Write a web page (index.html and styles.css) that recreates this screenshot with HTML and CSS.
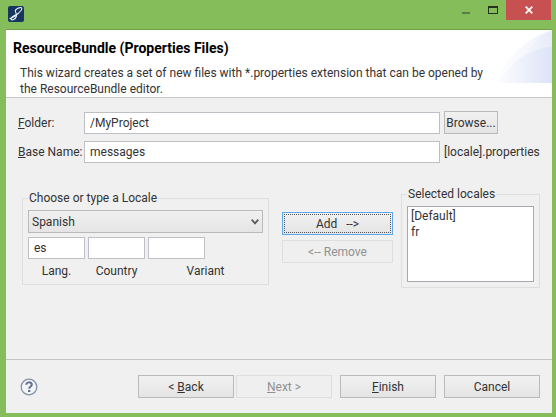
FILE: index.html
```html
<!DOCTYPE html>
<html lang="en">
<head>
<meta charset="utf-8">
<title>ResourceBundle (Properties Files)</title>
<link rel="stylesheet" href="styles.css">
</head>
<body>
<header class="titlebar">
  <svg class="app-icon" viewBox="0 0 16 16" aria-hidden="true">
    <rect width="16" height="16" rx="2" fill="#17365f"/>
    <path d="M1.500 12.500C6 12 13.500 5 13.800 2.700C14 1 10.500 1.200 8 3.500C5.500 6 9.500 7 8.500 10C7.500 13.500 3.500 15 3 13C2.600 11 7 9 10.500 7.500" fill="none" stroke="#e8eef8" stroke-width="1.100"/>
  </svg>
  <div class="window-buttons">
    <button class="caption-button" type="button" aria-label="Minimize"><svg width="10" height="10" viewBox="0 0 10 10"><path d="M1 7h8v2H1z" fill="#5d7b48"/></svg></button>
    <button class="caption-button" type="button" aria-label="Maximize"><svg width="10" height="8" viewBox="0 0 10 8"><path d="M0 0h10v8H0zM1 2v5h8V2z" fill="#26301f" fill-rule="evenodd"/></svg></button>
    <button class="caption-button close" type="button" aria-label="Close"><svg width="8" height="8" viewBox="0 0 8 8"><path d="M.7.700l6.600 6.600M7.300.700L.7 7.300" stroke="#fff" stroke-width="1.800"/></svg></button>
  </div>
</header>
<main class="dialog">
  <section class="banner">
    <div class="banner-text">
      <h1>ResourceBundle (Properties Files)</h1>
      <p>This wizard creates a set of new files with *.properties extension that can be opened by the ResourceBundle editor.</p>
    </div>
    <svg class="banner-art" viewBox="0 0 58 53" aria-hidden="true">
      <defs>
        <linearGradient id="a"><stop offset="0" stop-color="#fff"/><stop offset="1" stop-color="#eef1fa"/></linearGradient>
        <linearGradient id="b"><stop offset="0" stop-color="#fafbfe"/><stop offset="1" stop-color="#e6ebf9"/></linearGradient>
        <linearGradient id="c"><stop offset="0" stop-color="#fafbfe"/><stop offset="1" stop-color="#d8e0f5"/></linearGradient>
      </defs>
      <path d="M0 53C12 28 32 8 58 0V53Z" fill="url(#a)"/>
      <path d="M20 53C24 30 38 8 58 1V53Z" fill="url(#b)"/>
      <path d="M4 53C16 32 34 19 58 17V53Z" fill="url(#c)" opacity=".7"/>
    </svg>
  </section>
  <form class="wizard">
    <div class="page">
      <div class="fields">
        <label for="folder"><u>F</u>older:</label>
        <input id="folder" type="text" value="/MyProject">
        <button class="button browse" type="button">Browse...</button>
        <label for="base"><u>B</u>ase Name:</label>
        <input id="base" type="text" value="messages">
        <span>[locale].properties</span>
      </div>
      <div class="locales">
        <fieldset class="chooser">
          <legend>Choose or type a Locale</legend>
          <div class="combo">
            <select aria-label="Locale"><option>Spanish</option></select>
            <svg width="8" height="6" viewBox="0 0 8 6" aria-hidden="true"><path d="M.7.700L4 4.300L7.300.700" fill="none" stroke="#5c5c5c" stroke-width="1.800"/></svg>
          </div>
          <div class="parts">
            <input id="lang" type="text" value="es">
            <input id="country" type="text">
            <input id="variant" type="text">
            <label for="lang">Lang.</label>
            <label for="country">Country</label>
            <label class="variant-label" for="variant">Variant</label>
          </div>
        </fieldset>
        <div class="transfer">
          <button class="button focused" type="button">Add &nbsp; --&gt;</button>
          <button class="button" type="button" disabled>&lt;-- Remove</button>
        </div>
        <fieldset class="selected">
          <legend>Selected locales</legend>
          <select size="4" aria-label="Selected locales"><option>[Default]</option><option>fr</option></select>
        </fieldset>
      </div>
    </div>
    <footer class="actions">
      <button class="help" type="button" aria-label="Help">
        <svg width="18" height="18" viewBox="0 0 18 18"><circle cx="9" cy="9" r="7.800" fill="#f3f4f7" stroke="#8390a8" stroke-width="1.300"/><path d="M6.300 6.800C6.300 3.600 11.800 3.600 11.800 6.600C11.800 8.600 9.200 8.500 9.200 10.800" fill="none" stroke="#62708f" stroke-width="2"/><path d="M8 12h2.300v2H8z" fill="#62708f"/></svg>
      </button>
      <div class="steps">
        <button class="button" type="button">&lt; <u>B</u>ack</button>
        <button class="button" type="button" disabled><u>N</u>ext &gt;</button>
      </div>
      <button class="button" type="submit"><u>F</u>inish</button>
      <button class="button" type="button">Cancel</button>
    </footer>
  </form>
</main>
</body>
</html>
```
FILE: styles.css
```css
* {
  box-sizing: border-box;
}

body {
  margin: 0;
  min-height: 100vh;
  display: flex;
  flex-direction: column;
  padding: 0 4px 4px 6px;
  background: #86bd5b;
  color: #333;
  font: 12px/16px Roboto, "Open Sans", sans-serif;
}

button,
input,
select {
  margin: 0;
  color: inherit;
  font: inherit;
}

/* Title bar */
.titlebar {
  height: 29px;
  display: flex;
  justify-content: space-between;
  padding: 0 1px 0 2px;
}

.app-icon {
  width: 16px;
  height: 16px;
  margin-top: 6px;
}

.window-buttons {
  display: flex;
  height: 20px;
}

.caption-button {
  width: 27px;
  display: flex;
  align-items: center;
  justify-content: center;
  padding: 0;
  border: 0;
  background: none;
}

.caption-button.close {
  width: 45px;
  background: #c75050;
}

/* Dialog */
.dialog {
  flex: 1;
  display: flex;
  flex-direction: column;
  border-top: 1px solid #6fa34a;
  background: #f0f0f0;
}

.banner {
  display: flex;
  justify-content: space-between;
  background: #fff;
  border-bottom: 1px solid #c8c8c8;
}

.banner-text {
  max-width: 480px;
  padding: 10px 0 0 7px;
}

.banner h1 {
  margin: 0;
  color: #000;
  font-size: 14px;
  line-height: 16px;
}

.banner p {
  margin: 9px 0 0;
  padding-left: 7px;
}

.banner-art {
  width: 58px;
  height: 53px;
  flex: none;
}

.wizard {
  flex: 1;
  display: flex;
  flex-direction: column;
}

.page {
  flex: 1;
  padding: 13px 12px;
}

.fields {
  display: grid;
  grid-template-columns: 62px 1fr 96px;
  gap: 7px 4px;
  align-items: center;
  white-space: nowrap;
}

input {
  width: 100%;
  height: 22px;
  padding: 0 5px;
  border: 1px solid #bfc0c6;
  background: #fff;
}

.button {
  height: 23px;
  padding: 0;
  border: 1px solid #bababa;
  background: linear-gradient(#f1f1f1, #e4e4e4);
}

.button:disabled {
  border-color: #dedede;
  background: #efefef;
  color: #919191;
}

.browse {
  width: 54px;
}

.focused {
  border-color: #5ba7f0;
  outline: 1px dotted #555;
  outline-offset: -3px;
}

/* Locale picker */
.locales {
  display: grid;
  grid-template-columns: 1fr 111px 147px;
  align-items: start;
  margin: 23px 0 0 4px;
}

fieldset {
  min-width: 0;
  margin: 0;
  padding: 4px 5px 5px;
  border: 1px solid #dedede;
}

legend {
  padding: 0 1px;
}

.chooser {
  margin: 4px 13px 0 0;
}

.selected {
  margin-left: 8px;
}

.combo {
  display: grid;
  align-items: center;
}

.combo > * {
  grid-area: 1 / 1;
}

.combo select {
  width: 100%;
  height: 23px;
  padding: 0 3px;
  border: 1px solid #bababa;
  border-radius: 0;
  background: linear-gradient(#f0f0f0, #e5e5e5);
  appearance: none;
}

.combo svg {
  justify-self: end;
  margin-right: 4px;
  pointer-events: none;
}

.parts {
  display: grid;
  grid-template-columns: repeat(3, 57px);
  gap: 4px 3px;
  margin-top: 4px;
  text-align: center;
}

.variant-label {
  width: 115px;
}

.transfer {
  display: grid;
  gap: 5px;
  margin-top: 26px;
}

.selected select {
  display: block;
  width: 100%;
  height: 76px;
  padding: 2px;
  border: 1px solid #a4a9b3;
  border-radius: 0;
  background: #fff;
  overflow: hidden;
}

.selected option {
  min-height: 16px;
  padding: 0 1px;
}

/* Wizard buttons */
.actions {
  display: flex;
  align-items: center;
  gap: 8px;
  padding: 15px 12px;
  border-top: 1px solid #c4c4c4;
}

.help {
  display: flex;
  margin: 0 auto 0 2px;
  padding: 0;
  border: 0;
  background: none;
}

.steps {
  display: flex;
  gap: 2px;
}

.actions .button {
  width: 96px;
}
```
